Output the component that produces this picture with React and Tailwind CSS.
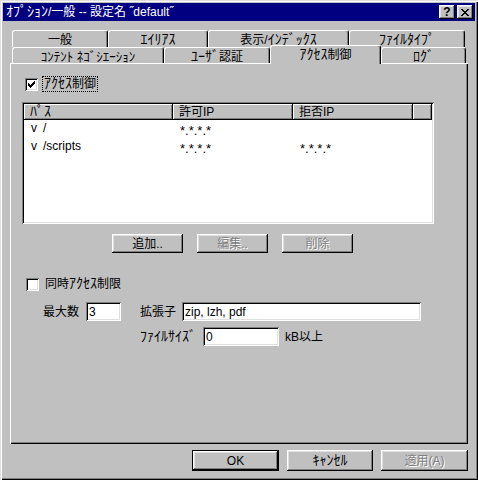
import React from "react";

// win95 bevels
const raised =
  "shadow-[inset_-1px_-1px_0_#000,inset_1px_1px_0_#fff,inset_-2px_-2px_0_#808080,inset_2px_2px_0_#dfdfdf]";
const sunken =
  "shadow-[inset_1px_1px_0_#808080,inset_-1px_-1px_0_#fff,inset_2px_2px_0_#000,inset_-2px_-2px_0_#dfdfdf]";
const tabEdge =
  "border-l border-t border-r border-l-white border-t-white border-r-black rounded-t-[3px] shadow-[inset_-1px_0_0_#808080]";

const backTabs = [
  { label: "一般", w: "w-[96px]" },
  { label: "ｴｲﾘｱｽ", w: "w-[100px]" },
  { label: "表示/ｲﾝﾃﾞｯｸｽ", w: "w-[141px]" },
  { label: "ﾌｧｲﾙﾀｲﾌﾟ", w: "w-[116px]" },
];

const frontTabs = [
  { label: "ｺﾝﾃﾝﾄ ﾈｺﾞｼｴｰｼｮﾝ", w: "w-[152px]", small: true },
  { label: "ﾕｰｻﾞ認証", w: "w-[106px]" },
  { label: "ｱｸｾｽ制御", w: "w-[111px]", selected: true },
  { label: "ﾛｸﾞ", w: "w-[85px]" },
];

const rows = [
  { path: "/", allow: "*.*.*.*", deny: "" },
  { path: "/scripts", allow: "*.*.*.*", deny: "*.*.*.*" },
];

// half-width katakana in Noto is tiny at 12px, bump it up a bit
// (leading-0 so the bigger span doesn't push the line down)
function T({children, small}) {
  return String(children)
    .split(/([\uFF61-\uFF9F]+)/)
    .map((part, i) =>
      /[\uFF61-\uFF9F]/.test(part) ? (
        <span key={i} className={small ? "text-[13px] leading-[0]" : "text-[14px] leading-[0]"}>
          {part}
        </span>
      ) : (
        part
      )
    );
}

function Check() {
  return (
    <svg width="7" height="7" viewBox="0 0 7 7" shapeRendering="crispEdges">
      <path
        fill="#000"
        d="M6 0h1v1h-1z M5 1h2v1h-2z M0 2h1v1h-1z M4 2h3v1h-3z M0 3h2v1h-2z M3 3h3v1h-3z M0 4h5v1h-5z M1 5h3v1h-3z M2 6h1v1h-1z"
      />
    </svg>
  );
}

function Checkbox({checked}) {
  return (
    <div className={`w-[13px] h-[13px] bg-white flex items-center justify-center shrink-0 ${sunken}`}>
      {checked && <Check/>}
    </div>
  );
}

function Tab({label, w, selected, small}) {
  if (selected) {
    return (
      <div
        className={`${w} h-[19px] -mt-[2px] relative z-10 bg-[#c0c0c0] flex items-start justify-center pt-[3px] ${tabEdge}`}
      >
        <span>
          <T>{label}</T>
        </span>
      </div>
    );
  }
  return (
    <div className={`${w} h-[17px] bg-[#c0c0c0] flex items-start justify-center pt-[3px] ${tabEdge}`}>
      <span>
        <T small={small}>{label}</T>
      </span>
    </div>
  );
}

function Button({children, w, disabled, isDefault}) {
  if (isDefault) {
    return (
      <div className={`${w} h-[21px] border border-black flex`}>
        <div className={`flex-1 flex items-center justify-center ${raised}`}>{children}</div>
      </div>
    );
  }
  return (
    <div
      className={`${w} flex items-center justify-center ${raised} ${
        disabled ? "text-[#808080] [text-shadow:1px_1px_0_#fff]" : ""
      }`}
    >
      {children}
    </div>
  );
}

function Input({w, value}) {
  return (
    <div className={`${w} h-[19px] bg-white flex items-center pl-[3px] ${sunken}`}>{value}</div>
  );
}

export default function App() {
  return (
    <div className="w-[478px] h-[480px] bg-[#c0c0c0] p-[3px] flex flex-col text-[12px] leading-none text-black [font-family:'Liberation_Sans','Noto_Sans_CJK_JP',sans-serif] shadow-[inset_1px_1px_0_#dfdfdf,inset_2px_2px_0_#fff,inset_-1px_-1px_0_#000,inset_-2px_-2px_0_#808080]">
      {/* title bar */}
      <div className="h-[18px] bg-[#000080] flex items-center pl-[3px] pr-[2px]">
        <span className="text-white flex-1 whitespace-nowrap">
          <T>ｵﾌﾟｼｮﾝ/一般 -- 設定名 ˝default˝</T>
        </span>
        <div className={`w-[16px] h-[14px] bg-[#c0c0c0] flex items-center justify-center font-bold text-[12px] ${raised}`}>
          ?
        </div>
        <div className={`w-[16px] h-[14px] ml-[2px] bg-[#c0c0c0] flex items-center justify-center ${raised}`}>
          <svg width="8" height="7" viewBox="0 0 8 7" shapeRendering="crispEdges">
            <path
              fill="#000"
              d="M0 0h2v1h-2z M6 0h2v1h-2z M1 1h2v1h-2z M5 1h2v1h-2z M2 2h4v1h-4z M3 3h2v1h-2z M2 4h4v1h-4z M1 5h2v1h-2z M5 5h2v1h-2z M0 6h2v1h-2z M6 6h2v1h-2z"
            />
          </svg>
        </div>
      </div>

      <div className="flex flex-col px-[7px] pt-[9px]">
        {/* tabs */}
        <div className="flex h-[17px] ml-[2px]">
          {backTabs.map(t => (
            <Tab key={t.label} {...t}/>
          ))}
        </div>
        <div className="flex items-start h-[16px] ml-[2px]">
          {frontTabs.map(t => (
            <Tab key={t.label} {...t}/>
          ))}
        </div>

        {/* tab page */}
        <div className="w-[458px] h-[381px] flex flex-col pl-[12px] pt-[13px] shadow-[inset_1px_1px_0_#fff,inset_-1px_-1px_0_#000,inset_-2px_-2px_0_#808080]">
          <div className="flex items-center h-[16px] pl-[3px]">
            <Checkbox checked/>
            <span className="ml-[4px] h-[16px] flex items-center px-[1px] border border-dotted border-black">
              <span>
                <T>ｱｸｾｽ制御</T>
              </span>
            </span>
          </div>

          {/* list view */}
          <div className={`mt-[10px] w-[412px] h-[122px] bg-white p-[2px] flex flex-col ${sunken}`}>
            <div className="flex h-[16px] bg-[#c0c0c0]">
              {[
                ["ﾊﾟｽ", "w-[149px]"],
                ["許可IP", "w-[120px]"],
                ["拒否IP", "w-[120px]"],
                ["", "w-[19px]"],
              ].map(([label, w], i) => (
                <div
                  key={i}
                  className={`${w} flex items-center pl-[6px] shadow-[inset_-1px_-1px_0_#000,inset_1px_1px_0_#fff,inset_-2px_-2px_0_#808080]`}
                >
                  <span>
                    <T>{label}</T>
                  </span>
                </div>
              ))}
            </div>
            {rows.map(r => (
              <div key={r.path} className="flex h-[18px] items-start pt-[2px]">
                <div className="w-[149px] flex pl-[7px]">
                  <span className="w-[12px]">v</span>
                  <span>{r.path}</span>
                </div>
                <div className="w-[120px] pl-[7px] pt-[2px] text-[13px]">{r.allow}</div>
                <div className="w-[120px] pl-[7px] pt-[2px] text-[13px]">{r.deny}</div>
              </div>
            ))}
          </div>

          <div className="flex h-[19px] mt-[10px] pl-[90px] gap-[14px]">
            <Button w="w-[71px]">追加..</Button>
            <Button w="w-[71px]" disabled>編集..</Button>
            <Button w="w-[71px]" disabled>削除</Button>
          </div>

          <div className="flex items-center h-[14px] mt-[24px] pl-[4px]">
            <Checkbox/>
            <span className="ml-[6px]">
              <T>同時ｱｸｾｽ制限</T>
            </span>
          </div>

          <div className="flex items-center mt-[11px] pl-[21px]">
            <span className="w-[43px]">最大数</span>
            <Input w="w-[35px]" value="3"/>
            <span className="ml-[19px] w-[42px]">拡張子</span>
            <Input w="w-[239px]" value="zip, lzh, pdf"/>
          </div>

          <div className="flex items-center mt-[6px] pl-[118px]">
            <span className="w-[63px]">
              <T>ﾌｧｲﾙｻｲｽﾞ</T>
            </span>
            <Input w="w-[76px]" value="0"/>
            <span className="ml-[6px]">kB以上</span>
          </div>
        </div>

        {/* dialog buttons */}
        <div className="flex justify-end gap-[8px] mt-[6px] h-[21px]">
          <Button w="w-[87px]" isDefault>OK</Button>
          <Button w="w-[86px]">
            <span>
              <T>ｷｬﾝｾﾙ</T>
            </span>
          </Button>
          <Button w="w-[87px]" disabled>適用(A)</Button>
        </div>
      </div>
    </div>
  );
}
